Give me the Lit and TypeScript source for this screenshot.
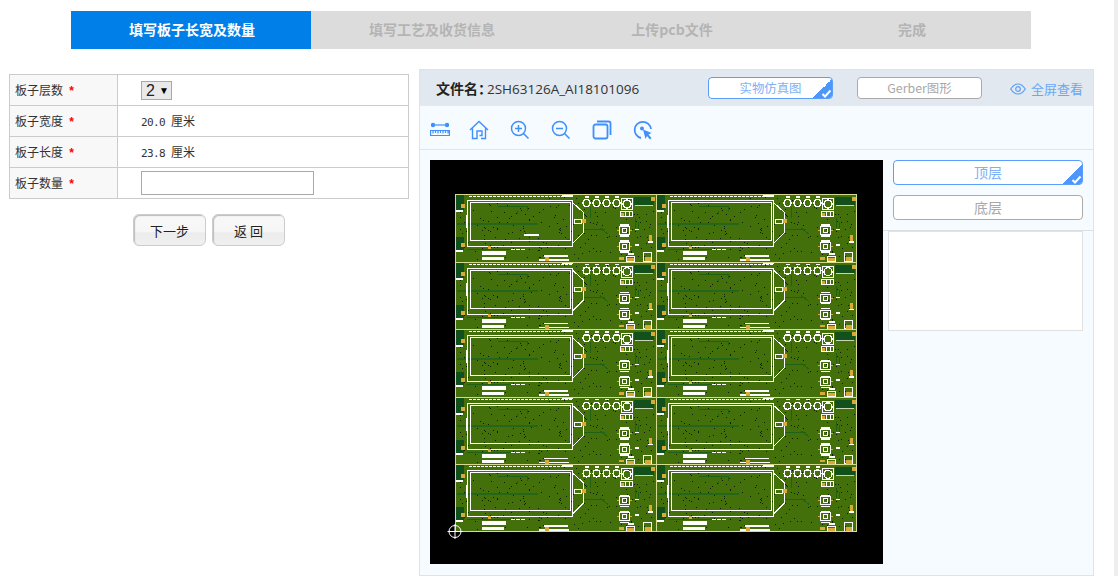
import {LitElement, html, css, svg} from 'lit';
import {customElement} from 'lit/decorators.js';

const STEPS = ['填写板子长宽及数量', '填写工艺及收货信息', '上传pcb文件', '完成'];

const FIELDS = [
  {label: '板子层数', kind: 'select'},
  {label: '板子宽度', kind: 'value', value: '20.0'},
  {label: '板子长度', kind: 'value', value: '23.8'},
  {label: '板子数量', kind: 'input'},
];

const CELL_W = 201;
const CELL_H = 67.6;
const GOLD = '#d9a93a';

// small seeded generator so the drill dots stay put between runs
function dots(count: number) {
  let seed = 1234;
  const next = () => {
    seed = (seed * 16807) % 2147483647;
    return seed / 2147483647;
  };
  const out = [];
  for (let i = 0; i < count; i++) {
    out.push([Math.round(next() * 195) + 3, Math.round(next() * 62) + 3]);
  }
  return out;
}

function board() {
  const white = 'fill:none;stroke:#fff;stroke-width:1';
  const thick = 'fill:none;stroke:#fff;stroke-width:1.4';
  const trace = 'fill:none;stroke:#1f6216;stroke-width:1';
  const cell = svg`
    <g id="cell">
      <rect width="201" height="67.6" fill="#44700c"></rect>
      ${dots(210).map(([x, y]) => svg`<rect x=${x} y=${y} width="1" height="1" fill="#0c1a06"></rect>`)}
      <rect x="2" y="28.5" width="81" height="2" fill="#24661a"></rect>
      <path d="M43 12.5H72V17M62 17V20M70 55.5H12M128 35.5H150M135 13V24M180 24V34M145 34l8 6M112 46l6-2M183 28v8" style=${trace}></path>
      <path d="M14 2.5H117" style="fill:none;stroke:#fff;stroke-width:1;stroke-dasharray:3 1"></path>
      <rect x="12.5" y="6.5" width="105" height="46" style=${white}></rect>
      <rect x="15.5" y="8.5" width="100" height="38" style=${white}></rect>
      <rect x="11" y="21" width="1.5" height="13" fill="#fff"></rect>
      <path d="M118 9l10 9v21l-10 10" style=${white}></path>
      <rect x="119.5" y="25.5" width="7" height="4" style=${white}></rect>
      <rect x="127" y="25" width="4" height="4" fill=${GOLD}></rect>
      <rect x="33" y="52" width="3" height="3" fill=${GOLD}></rect>
      <rect x="107" y="0.5" width="11" height="2" fill="#fff"></rect>
      ${[131.5, 141.5, 151.5, 161.5].map(
        (x) => svg`<circle cx=${x} cy="9" r="3.4" style=${thick}></circle>
          <rect x=${x - 2} y="2" width="4" height="1.5" fill="#fff"></rect>`
      )}
      <rect x="166.5" y="4.5" width="11" height="11" style=${white}></rect>
      <circle cx="172" cy="10" r="4" style=${thick}></circle>
      <rect x="165.5" y="17.5" width="12" height="5" style=${white}></rect>
      <path d="M170 17V23M174 17V23" style=${white}></path>
      <rect x="166" y="19" width="3" height="3" fill=${GOLD}></rect>
      ${[31, 47].map(
        (y) => svg`<rect x="162" y=${y + 5} width="2" height="1" fill=${GOLD}></rect>
          <rect x="175" y=${y + 5} width="2" height="1" fill=${GOLD}></rect>
          <path d=${`M165 ${y}H174M165 ${y + 11}H174`} style=${thick}></path>
          <rect x="164.5" y=${y + 1.5} width="10" height="8" style=${white}></rect>
          <rect x="167.5" y=${y + 3.5} width="4" height="4" style=${white}></rect>`
      )}
      <rect x="179" y="3" width="20" height="8" fill="#12501c"></rect>
      <rect x="180" y="11" width="18" height="1" fill="#fff" opacity=".7"></rect>
      <rect x="196" y="3" width="4" height="4" fill=${GOLD}></rect>
      <rect x="194" y="41" width="3" height="6" fill=${GOLD}></rect>
      <rect x="193" y="47" width="5" height="1.5" fill="#fff"></rect>
      <rect x="180" y="35" width="4" height="1" fill="#fff"></rect>
      <rect x="180" y="50" width="4" height="2" fill="#fff"></rect>
      <rect x="1" y="1" width="8" height="15" fill="#12501c"></rect>
      <rect x="6" y="10" width="4" height="4" fill=${GOLD}></rect>
      <rect x="1" y="16" width="7" height="2" fill="#fff"></rect>
      <rect x="1" y="43" width="8" height="13" fill="#12501c"></rect>
      <rect x="6" y="49" width="4" height="4" fill=${GOLD}></rect>
      <rect x="1" y="56" width="7" height="2" fill="#fff"></rect>
      <rect x="26.5" y="57" width="24" height="4" fill="#fff"></rect>
      <rect x="26.5" y="63" width="22" height="3" fill="#fff"></rect>
      <path d="M56 55.5H70" style="fill:none;stroke:#fff;stroke-width:1;stroke-dasharray:4 1"></path>
      <rect x="84" y="65" width="30" height="1.5" fill="#fff"></rect>
      <rect x="89" y="61" width="24" height="1.5" fill="#fff"></rect>
      <rect x="90" y="63" width="4" height="4" fill=${GOLD}></rect>
      <rect x="164" y="63" width="5" height="2.5" fill=${GOLD}></rect>
      <rect x="171.5" y="62.5" width="8" height="5" style=${white}></rect>
      <rect x="172" y="64" width="7" height="3" fill=${GOLD}></rect>
      <rect x="173" y="59" width="6" height="2" fill="#fff"></rect>
      <rect x="188.5" y="58.5" width="8" height="8.5" style=${white}></rect>
      <rect x="190" y="63" width="6" height="4" fill=${GOLD}></rect>
      <rect x="0" y="0" width="201" height="1" fill="#d5db8e"></rect>
      <rect x="0" y="0" width="1" height="67.6" fill="#d5db8e"></rect>
    </g>`;
  const uses = [];
  for (let row = 0; row < 5; row++) {
    for (let col = 0; col < 2; col++) {
      uses.push(svg`<use href="#cell" x=${25 + col * CELL_W} y=${34 + row * CELL_H}></use>`);
    }
  }
  return html`<svg class="board" width="453" height="404" viewBox="0 0 453 404" shape-rendering="crispEdges">
    <defs>${cell}</defs>
    ${uses}
    <rect x="94" y="74" width="15" height="2" fill="#fff"></rect>
    <rect x="25" y="371" width="402" height="1" fill="#d5db8e"></rect>
    <rect x="426" y="34" width="1" height="338" fill="#d5db8e"></rect>
    <g shape-rendering="auto" fill="none" stroke="#fff">
      <circle cx="25" cy="371.5" r="6"></circle>
      <path d="M25 364V379M17.5 371.5H32.5"></path>
    </g>
  </svg>`;
}

const ICONS = [
  html`<svg class="ruler" width="20" height="16" viewBox="0 0 20 16"><g fill="none" stroke="#3f90fb" stroke-width="1.2"><path d="M3 3H17"></path><path d="M.6 8.5H19.4V13.5H.6zM3 9V11.5M5.5 9V11M8 9V11.5M10.5 9V11M13 9V11.5M15.5 9V11M18 9V11.5"></path></g><circle cx="3" cy="3" r="2.2" fill="#3f90fb"></circle><circle cx="17" cy="3" r="2.2" fill="#3f90fb"></circle></svg>`,
  html`<svg width="20" height="20" viewBox="0 0 20 20"><path d="M1 10 10 1.5 19 10M3.5 8.5V18.5H8V11H13V15.5H10.5M16.5 8.5V18.5H12" fill="none" stroke="#3f90fb" stroke-width="1.4"></path></svg>`,
  html`<svg width="20" height="20" viewBox="0 0 20 20"><g fill="none" stroke="#3f90fb" stroke-width="1.5"><circle cx="8.5" cy="8.5" r="7"></circle><path d="M5 8.5H12M8.5 5V12M13.5 13.5 18.5 18.5"></path></g></svg>`,
  html`<svg width="20" height="20" viewBox="0 0 20 20"><g fill="none" stroke="#3f90fb" stroke-width="1.5"><circle cx="8.5" cy="8.5" r="7"></circle><path d="M5 8.5H12M13.5 13.5 18.5 18.5"></path></g></svg>`,
  html`<svg width="20" height="20" viewBox="0 0 20 20"><g fill="none" stroke="#3f90fb" stroke-width="1.8"><rect x="1.5" y="4.5" width="14" height="14" rx="2"></rect><path d="M5 1.5H16.5A2 2 0 0 1 18.5 3.5V15"></path></g></svg>`,
  html`<svg width="20" height="20" viewBox="0 0 20 20"><path d="M8 18A8.2 8.2 0 1 1 18 9" fill="none" stroke="#3f90fb" stroke-width="1.8"></path><circle cx="9" cy="8.5" r="2" fill="#3f90fb"></circle><path d="M10 9.5 18.5 13 15.5 14.5 18.5 18 17 19.5 14 16 12.5 19z" fill="#3f90fb"></path></svg>`,
];

const check = html`<span class="corner"><svg width="11" height="9" viewBox="0 0 11 9"><path d="M1.5 5 4 7.5 9.5 1.5" fill="none" stroke="#fff" stroke-width="2"></path></svg></span>`;

@customElement('app-root')
export class AppRoot extends LitElement {
  static styles = css`
    :host {
      display: block;
      width: 1118px;
      height: 576px;
      overflow: hidden;
      position: relative;
      background: #fff;
      font-family: 'Noto Sans CJK SC', 'Liberation Sans', sans-serif;
      color: #333;
    }

    .steps {
      display: flex;
      width: 960px;
      height: 38px;
      padding: 11px 0 0 71px;
    }

    .step {
      flex: 1;
      background: #dcdcdc;
      color: #b4b4b4;
      font-size: 14px;
      font-weight: 700;
      line-height: 37px;
      text-align: center;
      text-indent: 2px;
    }

    .step.active {
      background: #007fe9;
      color: #fff;
    }

    .main {
      display: flex;
      align-items: flex-start;
      gap: 10px;
      padding: 20px 0 0 9px;
    }

    .form {
      width: 400px;
      margin-top: 5px;
      flex: none;
    }

    table {
      width: 400px;
      border-collapse: collapse;
      table-layout: fixed;
      font-size: 12px;
    }

    td {
      height: 30px;
      padding: 0;
      border: 1px solid #cbcbcb;
      box-sizing: content-box;
    }

    td.label {
      width: 102px;
      padding: 0 0 1px 5px;
      height: 29px;
      background: #f8f8f8;
      color: #333;
    }

    td.label i {
      color: #f00;
      font-style: normal;
      font-weight: 700;
      font-family: 'Liberation Mono', monospace;
      margin-left: 5px;
    }

    td.field {
      padding-left: 23px;
    }

    .select {
      display: inline-flex;
      align-items: center;
      gap: 4px;
      height: 17px;
      width: 25px;
      padding-left: 4px;
      box-sizing: content-box;
      background: #e9e9e9;
      border: 1px solid #a9a9a9;
      font: 16px 'Liberation Sans', sans-serif;
      color: #222;
      vertical-align: middle;
    }

    .select b {
      font-size: 10px;
      font-weight: 400;
      color: #000;
    }

    .value {
      font-family: 'DejaVu Sans Mono', monospace;
      font-size: 11px;
      letter-spacing: -0.62px;
      margin-top: -1px;
    }

    .value span {
      font-family: 'Noto Sans CJK SC', sans-serif;
      font-size: 12px;
      letter-spacing: 0;
      margin-left: 6px;
    }

    input {
      display: block;
      width: 173px;
      height: 24px;
      box-sizing: border-box;
      border: 1px solid #a9a9a9;
      padding: 0 4px;
      outline: none;
    }

    .actions {
      display: flex;
      justify-content: center;
      gap: 6px;
      margin-top: 15px;
    }

    .actions button {
      width: 73px;
      height: 32px;
      padding: 0;
      border: 1px solid #ccc;
      border-radius: 6px;
      background: linear-gradient(#f8f8f8 0%, #f6f6f6 55%, #ececec 60%, #f0f0f0 100%);
      box-shadow: inset 1px 1px 1px #bbb;
      font: 13px 'Noto Sans CJK SC', sans-serif;
      color: #222;
    }

    .panel {
      width: 675px;
      height: 507px;
      box-sizing: border-box;
      flex: none;
      border: 1px solid #dfe3e7;
      background: #f6fbff;
    }

    .head {
      display: flex;
      align-items: center;
      height: 35px;
      background: #e1e8ef;
      padding-left: 16px;
      font-size: 14px;
      color: #333;
    }

    .file {
      width: 272px;
      flex: none;
      font-family: 'Open Sans', 'Noto Sans CJK SC', sans-serif;
      font-size: 13.5px;
    }

    .file b {
      font-family: 'Noto Sans CJK SC', sans-serif;
      font-size: 14px;
      color: #222;
      margin-right: -5px;
    }

    .tab {
      position: relative;
      width: 125px;
      height: 22px;
      box-sizing: border-box;
      border: 1px solid #aaa;
      border-radius: 4px;
      background: #fff;
      color: #a8a8a8;
      font-size: 12.4px;
      line-height: 20px;
      text-align: center;
      overflow: hidden;
      flex: none;
    }

    .tab.on {
      border-color: #5a9dfa;
      color: #7cb2f5;
    }

    .head .tab + .tab {
      margin-left: 24px;
    }

    .corner {
      position: absolute;
      right: -1px;
      bottom: -1px;
      width: 21px;
      height: 21px;
      background: linear-gradient(135deg, transparent 50%, #4d96fb 50%);
    }

    .corner svg {
      position: absolute;
      right: 1px;
      bottom: 1px;
    }

    .full {
      display: flex;
      align-items: center;
      gap: 5px;
      margin: 2px 0 0 28px;
      color: #69a8f5;
      font-size: 13px;
    }

    .tools {
      display: flex;
      align-items: center;
      gap: 21px;
      height: 45px;
      padding: 5px 0 0 10px;
      border-bottom: 1px solid #e2e5e8;
      border-top: 1px solid #e6eaee;
      box-sizing: border-box;
    }

    .tools svg {
      display: block;
    }

    .tools .ruler {
      margin-right: -2px;
    }

    .work {
      display: flex;
      padding: 10px 0 0 10px;
    }

    .board {
      display: block;
      background: #000;
      flex: none;
    }

    .side {
      flex: 1;
      padding-left: 5px;
    }

    .side .tab {
      width: 190px;
      height: 25px;
      line-height: 23px;
      margin: 0 0 10px 5px;
      font-size: 14px;
    }

    .side .rule {
      height: 1px;
      background: #dcdfe2;
      margin-left: -5px;
    }

    .side .box {
      width: 195px;
      height: 100px;
      box-sizing: border-box;
      background: #fff;
      border: 1px solid #dfe1e3;
    }

    .edge {
      position: absolute;
      top: 0;
      right: 0;
      width: 4px;
      height: 100%;
      background: #eee;
    }
  `;

  render() {
    return html`
      <div class="steps">
        ${STEPS.map((s, i) => html`<div class="step ${i === 0 ? 'active' : ''}">${s}</div>`)}
      </div>
      <div class="main">
        <div class="form">
          <table>
            ${FIELDS.map(
              (f) => html`<tr>
                <td class="label">${f.label}<i>*</i></td>
                <td class="field">
                  ${f.kind === 'select' ? html`<div class="select">2 <b>▼</b></div>` : ''}
                  ${f.kind === 'value' ? html`<div class="value">${f.value}<span>厘米</span></div>` : ''}
                  ${f.kind === 'input' ? html`<input type="text" />` : ''}
                </td>
              </tr>`
            )}
          </table>
          <div class="actions">
            <button>下一步</button>
            <button>返 回</button>
          </div>
        </div>
        <div class="panel">
          <div class="head">
            <div class="file"><b>文件名：</b>2SH63126A_AI18101096</div>
            <div class="tab on">实物仿真图${check}</div>
            <div class="tab">Gerber图形</div>
            <div class="full">
              <svg width="16" height="12" viewBox="0 0 16 12"><g fill="none" stroke="#5c9ff5" stroke-width="1.2"><path d="M.7 6C3 2.5 5.5 1 8 1s5 1.5 7.3 5C13 9.5 10.5 11 8 11S3 9.5 .7 6z"></path><circle cx="8" cy="6" r="2.3"></circle></g></svg>
              全屏查看
            </div>
          </div>
          <div class="tools">${ICONS}</div>
          <div class="work">
            ${board()}
            <div class="side">
              <div class="tab on">顶层${check}</div>
              <div class="tab">底层</div>
              <div class="rule"></div>
              <div class="box"></div>
            </div>
          </div>
        </div>
      </div>
      <div class="edge"></div>
    `;
  }
}
